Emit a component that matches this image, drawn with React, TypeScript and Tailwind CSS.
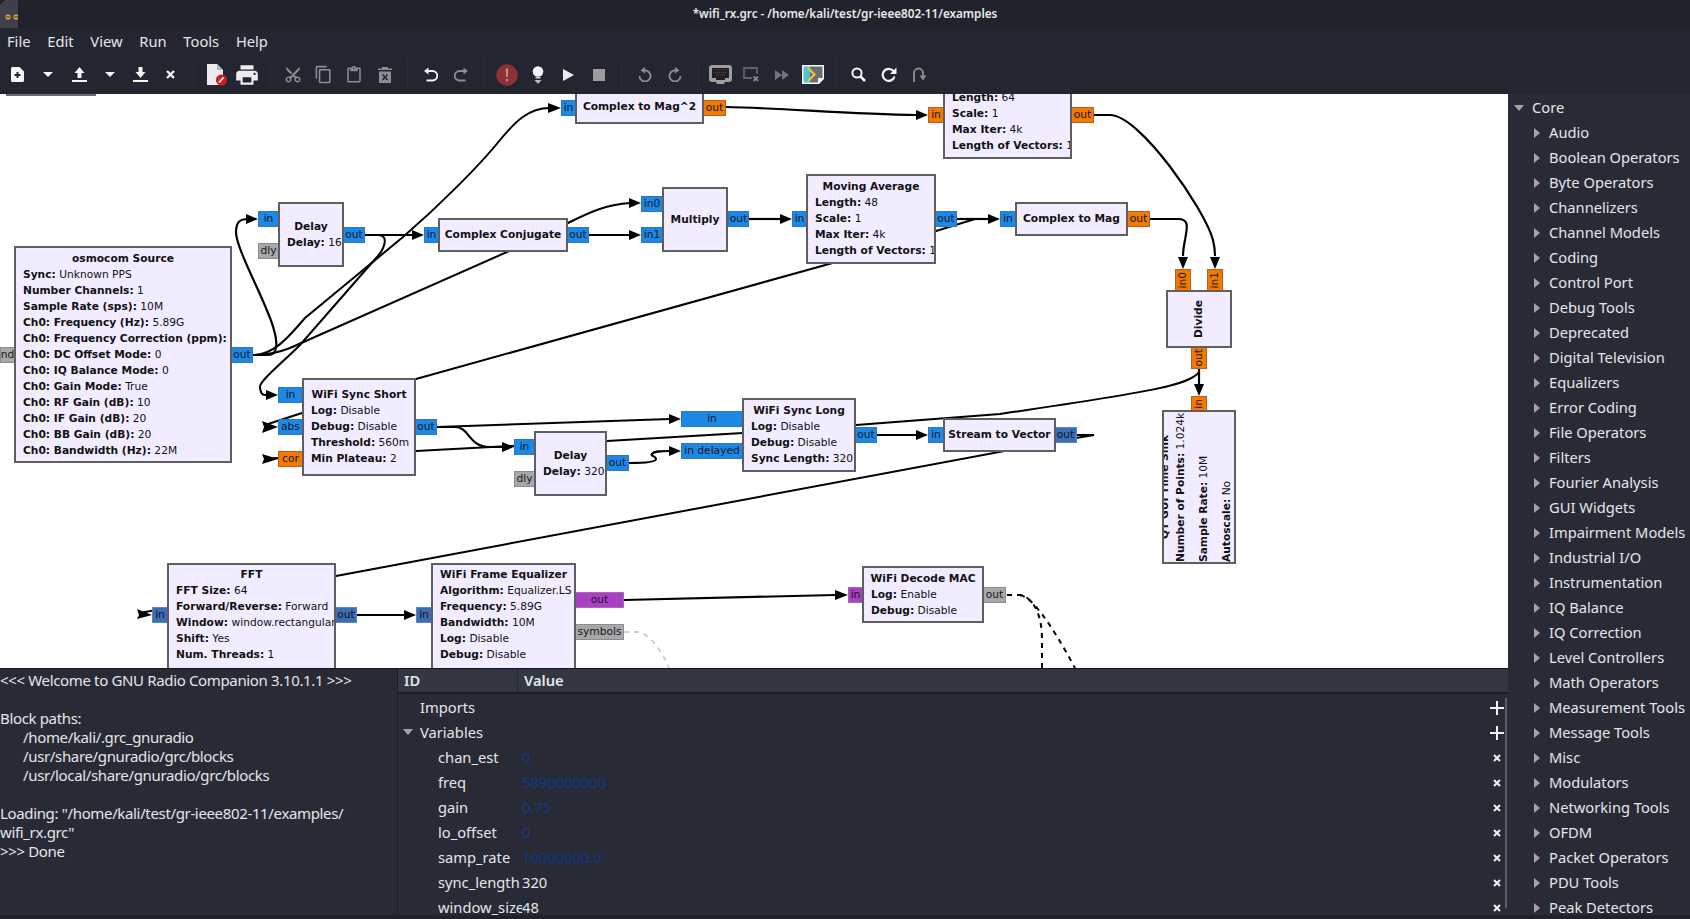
import React from 'react';

const portColors = {
  blue: 'bg-[#1e88e5] border-[#2f74bd]',
  orange: 'bg-[#f27a00] border-[#c05a28]',
  dark: 'bg-[#3d6db3] border-[#5b84c4]',
  purple: 'bg-[#ab3ec2] border-[#9c6fb5]',
  gray: 'bg-[#a8a8a8] border-[#8c8c8c]',
};

interface PortProps {
  pos: string;
  color: keyof typeof portColors;
  label: string;
  vertical?: boolean;
}

const Port = ({ pos, color, label, vertical }: PortProps) => (
  <div className={`absolute flex items-center justify-center overflow-hidden border text-[10.67px] leading-none text-[#101828] ${portColors[color]} ${pos}`}>
    <span className={vertical ? '[writing-mode:vertical-rl] rotate-180' : ''}>{label}</span>
  </div>
);

interface BlockProps {
  pos: string;
  title: string;
  params?: [string, string][];
  vertical?: boolean;
  topAlign?: boolean;
}

const Block = ({ pos, title, params = [], vertical, topAlign }: BlockProps) => (
  <div className={`absolute flex overflow-hidden border-2 border-[#5f5f5f] bg-[#f1ecff] text-[10.67px] leading-[16px] text-[#111] ${vertical ? 'flex-row justify-center' : 'flex-col'} ${topAlign ? 'justify-start pt-[2px]' : 'justify-center'} ${pos}`}>
    <div className={vertical ? 'h-full [writing-mode:vertical-rl] rotate-180' : ''}>
      <div className="whitespace-nowrap text-center font-bold">{title}</div>
      {params.map(([k, v]) => (
        <div key={k} className="whitespace-nowrap pl-[7px]">
          <span className="font-bold">{k}:</span> {v}
        </div>
      ))}
    </div>
  </div>
);

const Wires = () => (
  <svg className="absolute left-0 top-0" width="1508" height="919" fill="none" stroke="#000" strokeWidth="2.2">
    {/* osmocom out */}
    <path d="M253 355 L268 355 C279 355 277 340 274 330 C268 305 236 250 236 232 C236 222 240 219 248 219" />
    <path d="M253 355 C275 355 290 335 305 318 L403 237 C440 205 480 165 500 140 C515 122 528 108 550 108" strokeWidth="2" />
    <path d="M253 355 C270 355 280 352 290 348 L507 252 L568 223 C590 212 608 204 630 203" strokeWidth="2" />
    {/* delay out */}
    <path d="M365 235 L412 235" />
    <path d="M365 235 L378 235 C390 235 384 250 376 258 L300 345 C280 365 258 382 260 388 C261 394 262 395 266 395" strokeWidth="2" />
    <path d="M589 235 L630 235" />
    <path d="M749 219 L780 219" />
    <path d="M957 219 L988 219" />
    {/* moving average out goes back to abs */}
    <path d="M957 219 L975 219 L829 264 L416 379 L302 413 L265 425" strokeWidth="2" />
    {/* divide out goes back to cor */}
    <path d="M1199 372 C1190 385 1150 392 1000 414 L856 425 L743 433 L607 441 L416 451 L302 456 L265 459" strokeWidth="2" />
    <path d="M1199 369 L1199 386" />
    {/* sync short out */}
    <path d="M437 427 L670 419" strokeWidth="2" />
    <path d="M437 427 L455 427 C470 427 468 447 490 447 L502 447" />
    <path d="M629 463 C645 463 656 462 656 459 C656 456 650 456 652 454 C654 451 660 451 670 451" />
    <path d="M877 435 L916 435" />
    <path d="M726 107 C780 108 850 114 916 115" />
    <path d="M1093 115 L1110 115 C1140 115 1205 210 1213 240 C1215 248 1215 250 1215 256" />
    <path d="M1150 219 L1178 219 C1190 219 1187 228 1185 240 C1183 250 1183 252 1183 256" />
    {/* stream to vector out goes back to fft */}
    <path d="M1077 435 L1094 435 L1058 441 L336 576 L140 613" strokeWidth="2" />
    <path d="M357 615 L404 615" />
    <path d="M624 600 L835 595" />
    <path d="M1007 595 L1020 595 C1032 597 1042 612 1042 640 L1042 668" strokeWidth="2" strokeDasharray="5 5" />
    <path d="M1020 595 C1032 597 1050 622 1075 668" strokeWidth="2" strokeDasharray="5 5" />
    <path d="M624 632 L640 632 C650 636 662 650 669 668" stroke="#cfcfcf" strokeWidth="2" strokeDasharray="5 5" />
    {/* arrow heads */}
    <g fill="#000" stroke="none">
      <path d="M258 219 L246 214 L246 224z" />
      <path d="M424 235 L412 230 L412 240z" />
      <path d="M561 108 L548 103 L548 113z" />
      <path d="M641 203 L629 198 L629 208z" />
      <path d="M641 235 L629 230 L629 240z" />
      <path d="M792 219 L780 214 L780 224z" />
      <path d="M1000 219 L988 214 L988 224z" />
      <path d="M278 395 L266 390 L266 400z" />
      <path d="M278 427 L262 421 L264 427 L262 433z" />
      <path d="M278 459 L262 454 L264 459 L262 464z" />
      <path d="M514 447 L502 442 L502 452z" />
      <path d="M681 419 L669 414 L669 424z" />
      <path d="M681 451 L669 446 L669 456z" />
      <path d="M928 435 L916 430 L916 440z" />
      <path d="M928 115 L916 110 L916 120z" />
      <path d="M1215 269 L1210 257 L1220 257z" />
      <path d="M1183 269 L1178 257 L1188 257z" />
      <path d="M1199 396 L1194 384 L1204 384z" />
      <path d="M152 615 L137 609 L139 615 L137 619z" />
      <path d="M416 615 L404 610 L404 620z" />
      <path d="M848 595 L835 590 L835 600z" />
    </g>
  </svg>
);

const Canvas = () => (
  <div className="relative h-[574px] overflow-hidden bg-white">
    {/* offset so everything inside can use window coordinates */}
    <div className="absolute left-0 top-[-94px] h-[919px] w-[1508px] font-['DejaVu_Sans',sans-serif]">
      <Wires />

      <Port pos="left-0 top-[347px] w-[15px] h-[16px]" color="gray" label="nd" />
      <Port pos="left-[231px] top-[347px] w-[22px] h-[16px]" color="blue" label="out" />
      <Block
        pos="left-[14px] top-[246px] w-[218px] h-[217px]"
        title="osmocom Source"
        params={[
          ['Sync', 'Unknown PPS'],
          ['Number Channels', '1'],
          ['Sample Rate (sps)', '10M'],
          ['Ch0: Frequency (Hz)', '5.89G'],
          ['Ch0: Frequency Correction (ppm)', '0'],
          ['Ch0: DC Offset Mode', '0'],
          ['Ch0: IQ Balance Mode', '0'],
          ['Ch0: Gain Mode', 'True'],
          ['Ch0: RF Gain (dB)', '10'],
          ['Ch0: IF Gain (dB)', '20'],
          ['Ch0: BB Gain (dB)', '20'],
          ['Ch0: Bandwidth (Hz)', '22M'],
        ]}
      />

      <Port pos="left-[258px] top-[211px] w-[21px] h-[16px]" color="blue" label="in" />
      <Port pos="left-[258px] top-[243px] w-[21px] h-[16px]" color="gray" label="dly" />
      <Port pos="left-[343px] top-[227px] w-[22px] h-[16px]" color="blue" label="out" />
      <Block pos="left-[278px] top-[202px] w-[66px] h-[65px]" title="Delay" params={[['Delay', '16']]} />

      <Port pos="left-[424px] top-[227px] w-[15px] h-[16px]" color="blue" label="in" />
      <Port pos="left-[567px] top-[227px] w-[22px] h-[16px]" color="blue" label="out" />
      <Block pos="left-[438px] top-[218px] w-[130px] h-[34px]" title="Complex Conjugate" />

      <Port pos="left-[561px] top-[100px] w-[15px] h-[16px]" color="blue" label="in" />
      <Port pos="left-[703px] top-[100px] w-[23px] h-[16px]" color="orange" label="out" />
      <Block pos="left-[575px] top-[90px] w-[129px] h-[34px]" title="Complex to Mag^2" />

      <Port pos="left-[928px] top-[107px] w-[16px] h-[16px]" color="orange" label="in" />
      <Port pos="left-[1071px] top-[107px] w-[23px] h-[16px]" color="orange" label="out" />
      <Block
        pos="left-[943px] top-[69px] w-[129px] h-[90px]"
        title="Moving Average"
        params={[['Length', '64'], ['Scale', '1'], ['Max Iter', '4k'], ['Length of Vectors', '1']]}
      />

      <Port pos="left-[641px] top-[196px] w-[22px] h-[16px]" color="blue" label="in0" />
      <Port pos="left-[641px] top-[227px] w-[22px] h-[16px]" color="blue" label="in1" />
      <Port pos="left-[728px] top-[211px] w-[21px] h-[16px]" color="blue" label="out" />
      <Block pos="left-[662px] top-[187px] w-[66px] h-[65px]" title="Multiply" />

      <Port pos="left-[792px] top-[211px] w-[15px] h-[16px]" color="blue" label="in" />
      <Port pos="left-[935px] top-[211px] w-[22px] h-[16px]" color="blue" label="out" />
      <Block
        pos="left-[806px] top-[174px] w-[130px] h-[90px]"
        title="Moving Average"
        params={[['Length', '48'], ['Scale', '1'], ['Max Iter', '4k'], ['Length of Vectors', '1']]}
      />

      <Port pos="left-[1000px] top-[211px] w-[16px] h-[16px]" color="blue" label="in" />
      <Port pos="left-[1127px] top-[211px] w-[23px] h-[16px]" color="orange" label="out" />
      <Block pos="left-[1015px] top-[202px] w-[113px] h-[34px]" title="Complex to Mag" />

      <Port pos="left-[1175px] top-[269px] w-[16px] h-[22px]" color="orange" label="in0" vertical />
      <Port pos="left-[1207px] top-[269px] w-[16px] h-[22px]" color="orange" label="in1" vertical />
      <Port pos="left-[1191px] top-[347px] w-[16px] h-[22px]" color="orange" label="out" vertical />
      <Block pos="left-[1166px] top-[290px] w-[66px] h-[58px]" title="Divide" vertical />

      <Port pos="left-[1191px] top-[396px] w-[16px] h-[15px]" color="orange" label="in" vertical />
      <Block
        pos="left-[1162px] top-[410px] w-[74px] h-[154px]"
        title="QT GUI Time Sink"
        vertical
        params={[['Number of Points', '1.024k'], ['Sample Rate', '10M'], ['Autoscale', 'No']]}
      />

      <Port pos="left-[278px] top-[387px] w-[25px] h-[16px]" color="blue" label="in" />
      <Port pos="left-[278px] top-[419px] w-[25px] h-[16px]" color="blue" label="abs" />
      <Port pos="left-[278px] top-[451px] w-[25px] h-[16px]" color="orange" label="cor" />
      <Port pos="left-[415px] top-[419px] w-[22px] h-[16px]" color="blue" label="out" />
      <Block
        pos="left-[302px] top-[378px] w-[114px] h-[98px]"
        title="WiFi Sync Short"
        params={[['Log', 'Disable'], ['Debug', 'Disable'], ['Threshold', '560m'], ['Min Plateau', '2']]}
      />

      <Port pos="left-[514px] top-[439px] w-[21px] h-[16px]" color="blue" label="in" />
      <Port pos="left-[514px] top-[471px] w-[21px] h-[16px]" color="gray" label="dly" />
      <Port pos="left-[606px] top-[455px] w-[23px] h-[16px]" color="blue" label="out" />
      <Block pos="left-[534px] top-[431px] w-[73px] h-[65px]" title="Delay" params={[['Delay', '320']]} />

      <Port pos="left-[681px] top-[411px] w-[62px] h-[16px]" color="blue" label="in" />
      <Port pos="left-[681px] top-[443px] w-[62px] h-[16px]" color="blue" label="in delayed" />
      <Port pos="left-[855px] top-[427px] w-[22px] h-[16px]" color="blue" label="out" />
      <Block
        pos="left-[742px] top-[398px] w-[114px] h-[74px]"
        title="WiFi Sync Long"
        params={[['Log', 'Disable'], ['Debug', 'Disable'], ['Sync Length', '320']]}
      />

      <Port pos="left-[928px] top-[427px] w-[16px] h-[16px]" color="blue" label="in" />
      <Port pos="left-[1054px] top-[427px] w-[23px] h-[16px]" color="dark" label="out" />
      <Block pos="left-[943px] top-[418px] w-[113px] h-[34px]" title="Stream to Vector" />

      <Port pos="left-[152px] top-[607px] w-[16px] h-[16px]" color="dark" label="in" />
      <Port pos="left-[335px] top-[607px] w-[22px] h-[16px]" color="dark" label="out" />
      <Block
        pos="left-[167px] top-[563px] w-[169px] h-[118px]"
        title="FFT"
        topAlign
        params={[
          ['FFT Size', '64'],
          ['Forward/Reverse', 'Forward'],
          ['Window', 'window.rectangular...'],
          ['Shift', 'Yes'],
          ['Num. Threads', '1'],
        ]}
      />

      <Port pos="left-[416px] top-[607px] w-[16px] h-[16px]" color="dark" label="in" />
      <Port pos="left-[575px] top-[592px] w-[49px] h-[16px]" color="purple" label="out" />
      <Port pos="left-[575px] top-[624px] w-[49px] h-[16px]" color="gray" label="symbols" />
      <Block
        pos="left-[431px] top-[563px] w-[145px] h-[118px]"
        title="WiFi Frame Equalizer"
        topAlign
        params={[
          ['Algorithm', 'Equalizer.LS'],
          ['Frequency', '5.89G'],
          ['Bandwidth', '10M'],
          ['Log', 'Disable'],
          ['Debug', 'Disable'],
        ]}
      />

      <Port pos="left-[848px] top-[587px] w-[15px] h-[16px]" color="purple" label="in" />
      <Port pos="left-[983px] top-[587px] w-[23px] h-[16px]" color="gray" label="out" />
      <Block
        pos="left-[862px] top-[566px] w-[122px] h-[57px]"
        title="WiFi Decode MAC"
        params={[['Log', 'Enable'], ['Debug', 'Disable']]}
      />
    </div>
    <div className="absolute left-[6px] top-0 h-[2px] w-[90px] bg-[#6b6b6b]" />
  </div>
);

const white = '#f4f4f4';
const dim = '#8c8e93';

const Caret = () => (
  <svg width="10" height="5" viewBox="0 0 10 5"><path d="M0 0H10L5 5z" fill={white} /></svg>
);

const Mat = ({ d, size, color, className }: { d: string; size: number; color: string; className?: string }) => (
  <svg width={size} height={size} viewBox="0 0 24 24" className={className}><path d={d} fill={color} /></svg>
);

const Btn = ({ children }: { children: React.ReactNode }) => (
  <div className="flex h-full w-[30.6px] shrink-0 items-center justify-center">{children}</div>
);

const Sep = () => <div className="mx-[7.1px] h-[32px] w-px shrink-0 bg-[#2a2d37]" />;

const Toolbar = () => (
  <div className="flex h-[39px] shrink-0 items-center bg-[#232630] pl-[2.6px]">
    <Btn>
      <svg width="13" height="15" viewBox="0 0 13 15">
        <path d="M1.5 0H8.5L13 4.5V13.5A1.5 1.5 0 0 1 11.5 15H1.5A1.5 1.5 0 0 1 0 13.5V1.5A1.5 1.5 0 0 1 1.5 0z" fill={white} />
        <path d="M5.5 5H7.5V7H9.5V9H7.5V11H5.5V9H3.5V7H5.5z" fill="#232630" />
      </svg>
    </Btn>
    <Btn><Caret /></Btn>
    <Btn>
      <svg width="15" height="15" viewBox="0 0 15 15">
        <path d="M7.5 0L12.5 6H9.5V11H5.5V6H2.5z M0 13H15V15H0z" fill={white} />
      </svg>
    </Btn>
    <Btn><Caret /></Btn>
    <Btn>
      <svg width="15" height="15" viewBox="0 0 15 15">
        <path d="M5.5 0H9.5V5H12.5L7.5 11L2.5 5H5.5z M0 13H15V15H0z" fill={white} />
      </svg>
    </Btn>
    <Btn>
      <svg width="9" height="9" viewBox="0 0 9 9"><path d="M1 1L8 8M8 1L1 8" stroke={white} strokeWidth="2.4" /></svg>
    </Btn>
    <Sep />
    <Btn>
      <svg width="22" height="22" viewBox="0 0 22 22">
        <path d="M1 0H11L17 6V21H1z" fill="#ececec" />
        <path d="M11 0L17 6H11z" fill="#b5b5b5" />
        <circle cx="15.5" cy="16" r="5.6" fill="#d01c1c" />
        <path d="M13 18.5L17.5 13.5" stroke="#fff" strokeWidth="1.8" />
      </svg>
    </Btn>
    <Btn>
      <Mat size={26} color="#ececec" d="M19 8H5c-1.66 0-3 1.34-3 3v6h4v4h12v-4h4v-6c0-1.66-1.34-3-3-3zm-3 11H8v-5h8v5zm3-7c-.55 0-1-.45-1-1s.45-1 1-1 1 .45 1 1-.45 1-1 1zm-1-9H6v4h12V3z" />
    </Btn>
    <Sep />
    <Btn>
      <Mat size={18} color={dim} className="-rotate-90" d="M9.64 7.64c.23-.5.36-1.05.36-1.64 0-2.21-1.79-4-4-4S2 3.79 2 6s1.79 4 4 4c.59 0 1.14-.13 1.64-.36L10 12l-2.36 2.36C7.14 14.13 6.59 14 6 14c-2.21 0-4 1.79-4 4s1.79 4 4 4 4-1.79 4-4c0-.59-.13-1.14-.36-1.64L12 14l7 7h3v-1L9.64 7.64zM6 8c-1.1 0-2-.89-2-2s.9-2 2-2 2 .89 2 2-.9 2-2 2zm0 12c-1.1 0-2-.89-2-2s.9-2 2-2 2 .89 2 2-.9 2-2 2zm6-7.5c-.28 0-.5-.22-.5-.5s.22-.5.5-.5.5.22.5.5-.22.5-.5.5zM19 3l-6 6 2 2 7-7V3z" />
    </Btn>
    <Btn>
      <Mat size={19} color={dim} d="M16 1H4c-1.1 0-2 .9-2 2v14h2V3h12V1zm3 4H8c-1.1 0-2 .9-2 2v14c0 1.1.9 2 2 2h11c1.1 0 2-.9 2-2V7c0-1.1-.9-2-2-2zm0 16H8V7h11v14z" />
    </Btn>
    <Btn>
      <Mat size={18} color={dim} d="M19 2h-4.18C14.4.84 13.3 0 12 0c-1.3 0-2.4.84-2.82 2H5c-1.1 0-2 .9-2 2v16c0 1.1.9 2 2 2h14c1.1 0 2-.9 2-2V4c0-1.1-.9-2-2-2zm-7 0c.55 0 1 .45 1 1s-.45 1-1 1-1-.45-1-1 .45-1 1-1zm7 18H5V4h2v3h10V4h2v16z" />
    </Btn>
    <Btn>
      <svg width="14" height="16" viewBox="0 0 14 16">
        <path d="M4 0H10V1.5H14V3H0V1.5H4z M1 4.5H13V16H1z" fill={dim} />
        <path d="M4.5 7.5L9.5 13M9.5 7.5L4.5 13" stroke="#232630" strokeWidth="1.6" />
      </svg>
    </Btn>
    <Sep />
    <Btn>
      <svg width="15" height="15" viewBox="0 0 15 15" fill="none">
        <path d="M3 4H9.5A4.2 4.2 0 0 1 9.5 13.5H3.5" stroke={white} strokeWidth="1.8" />
        <path d="M5.5 0.5L1 4L5.5 7.5z" fill={white} />
      </svg>
    </Btn>
    <Btn>
      <svg width="15" height="15" viewBox="0 0 15 15" fill="none" className="-scale-x-100">
        <path d="M3 4H9.5A4.2 4.2 0 0 1 9.5 13.5H3.5" stroke={dim} strokeWidth="1.8" />
        <path d="M5.5 0.5L1 4L5.5 7.5z" fill={dim} />
      </svg>
    </Btn>
    <Sep />
    <Btn>
      <svg width="22" height="22" viewBox="0 0 22 22">
        <circle cx="11" cy="11" r="10.7" fill="#8c3237" />
        <path d="M9.8 4.5H12.2L11.8 13H10.2z M9.9 15H12.1V17.2H9.9z" fill="#b99a9a" />
      </svg>
    </Btn>
    <Btn>
      <svg width="12" height="18" viewBox="0 0 12 18">
        <circle cx="6" cy="5.5" r="5.3" fill="#f4f4f4" />
        <path d="M3.5 11H8.5V12.5H3.5z" fill="#cfcfcf" />
        <path d="M2.5 14H9.5L6 18z" fill="#bdbdbd" />
      </svg>
    </Btn>
    <Btn><svg width="11" height="12" viewBox="0 0 11 12"><path d="M0 0L11 6L0 12z" fill="#ececec" /></svg></Btn>
    <Btn><div className="h-[12px] w-[12px] bg-[#9b9b9b]" /></Btn>
    <Sep />
    <Btn>
      <svg width="14" height="15" viewBox="0 0 14 15" fill="none">
        <path d="M4.5 4A5.5 5.5 0 1 1 1.5 9" stroke={dim} strokeWidth="1.8" />
        <path d="M7 0V6.5L2.5 3.2z" fill={dim} />
      </svg>
    </Btn>
    <Btn>
      <svg width="14" height="15" viewBox="0 0 14 15" fill="none" className="-scale-x-100">
        <path d="M4.5 4A5.5 5.5 0 1 1 1.5 9" stroke={dim} strokeWidth="1.8" />
        <path d="M7 0V6.5L2.5 3.2z" fill={dim} />
      </svg>
    </Btn>
    <Sep />
    <Btn>
      <svg width="23" height="19" viewBox="0 0 23 19">
        <path d="M3 0H20A3 3 0 0 1 23 3V14A3 3 0 0 1 20 17H16L15 19H8L7 17H3A3 3 0 0 1 0 14V3A3 3 0 0 1 3 0z" fill="#9e9e9e" />
        <path d="M3 3H20V13H16V15H7V13H3z" fill="#23201f" />
        <path d="M6 5H17M6 7.5H17M7 10H16" stroke="#4d4d4d" strokeWidth="1" strokeDasharray="1 1" />
      </svg>
    </Btn>
    <Btn>
      <svg width="16" height="15" viewBox="0 0 16 15" fill="none">
        <path d="M9 11H1V1H14V7" stroke="#5f6168" strokeWidth="1.8" />
        <path d="M10.5 9.5L15 14M15 9.5L10.5 14" stroke="#85878d" strokeWidth="1.8" />
      </svg>
    </Btn>
    <Btn>
      <svg width="14" height="10" viewBox="0 0 14 10"><path d="M0 0L7 5L0 10z M7 0L14 5L7 10z" fill="#74767c" /></svg>
    </Btn>
    <Btn>
      <svg width="22" height="19" viewBox="0 0 22 19">
        <path d="M0 0H22V14L17 19H0z" fill="#f5f5f5" />
        <path d="M1.5 1.5H8V17.5H1.5z" fill="#4fc3cf" />
        <path d="M8 1.5H20.5V13H16V17.5H8z" fill="#6e6e6e" />
        <path d="M6 3L12.5 9.5L6 16" fill="none" stroke="#f9c22e" strokeWidth="2.2" />
      </svg>
    </Btn>
    <Sep />
    <Btn>
      <svg width="15" height="15" viewBox="0 0 15 15" fill="none">
        <circle cx="6" cy="6" r="4.6" stroke={white} strokeWidth="2" />
        <path d="M9.5 9.5L14 14" stroke={white} strokeWidth="2.6" />
      </svg>
    </Btn>
    <Btn>
      <svg width="16" height="15" viewBox="0 0 16 15" fill="none">
        <path d="M12.5 4.2A6 6 0 1 0 13.5 9.5" stroke={white} strokeWidth="2.2" />
        <path d="M15.5 0.5V7H9z" fill={white} />
      </svg>
    </Btn>
    <Btn>
      <svg width="15" height="15" viewBox="0 0 15 15" fill="none">
        <path d="M2 15V6A4.5 4.5 0 0 1 11 6V9" stroke={dim} strokeWidth="1.9" />
        <path d="M7.5 8.5H14.5L11 13.5z" fill={dim} />
      </svg>
    </Btn>
  </div>
);

const libraryItems = [
  'Audio', 'Boolean Operators', 'Byte Operators', 'Channelizers', 'Channel Models', 'Coding',
  'Control Port', 'Debug Tools', 'Deprecated', 'Digital Television', 'Equalizers', 'Error Coding',
  'File Operators', 'Filters', 'Fourier Analysis', 'GUI Widgets', 'Impairment Models', 'Industrial I/O',
  'Instrumentation', 'IQ Balance', 'IQ Correction', 'Level Controllers', 'Math Operators',
  'Measurement Tools', 'Message Tools', 'Misc', 'Modulators', 'Networking Tools', 'OFDM',
  'Packet Operators', 'PDU Tools', 'Peak Detectors',
];

const TriDown = () => (
  <svg width="10" height="6" viewBox="0 0 10 6"><path d="M0 0H10L5 6z" fill="#a3a5aa" /></svg>
);
const TriRight = () => (
  <svg width="6" height="10" viewBox="0 0 6 10"><path d="M0 0L6 5L0 10z" fill="#a3a5aa" /></svg>
);

const Library = () => (
  <div className="w-[182px] shrink-0 overflow-hidden bg-[#282b36] pt-[1px] text-[#e3e6ea]">
    <div className="flex h-[25px] items-center pl-[6px]">
      <TriDown />
      <span className="ml-[8px]">Core</span>
    </div>
    {libraryItems.map((name) => (
      <div key={name} className="flex h-[25px] items-center pl-[26px]">
        <TriRight />
        <span className="ml-[9px] whitespace-nowrap">{name}</span>
      </div>
    ))}
  </div>
);

const Console = () => (
  <div className="w-[398px] shrink-0 overflow-hidden whitespace-pre border-r border-[#1b1d24] pt-[2px] text-[15px] leading-[19px] tracking-[-0.35px] text-[#e3e6ea]">
    <div>{'<<< Welcome to GNU Radio Companion 3.10.1.1 >>>'}</div>
    <div>{' '}</div>
    <div>Block paths:</div>
    <div className="pl-[23px]">/home/kali/.grc_gnuradio</div>
    <div className="pl-[23px]">/usr/share/gnuradio/grc/blocks</div>
    <div className="pl-[23px]">/usr/local/share/gnuradio/grc/blocks</div>
    <div>{' '}</div>
    <div>Loading: "/home/kali/test/gr-ieee802-11/examples/</div>
    <div>wifi_rx.grc"</div>
    <div>{'>>> Done'}</div>
  </div>
);

const variables: [string, string, boolean][] = [
  ['chan_est', '0', true],
  ['freq', '5890000000', true],
  ['gain', '0.75', true],
  ['lo_offset', '0', true],
  ['samp_rate', '10000000.0', true],
  ['sync_length', '320', false],
  ['window_size', '48', false],
];

const Plus = () => (
  <svg width="14" height="14" viewBox="0 0 14 14"><path d="M7 0V14M0 7H14" stroke="#f4f4f4" strokeWidth="2" /></svg>
);
const Cross = () => (
  <svg width="8" height="8" viewBox="0 0 8 8"><path d="M1 1L7 7M7 1L1 7" stroke="#f0f0f0" strokeWidth="2" /></svg>
);

const VariableEditor = () => (
  <div className="relative min-w-0 flex-1 overflow-hidden">
    <div className="flex h-[25px] items-center border-b-2 border-[#1b1d24] bg-[#333743] font-semibold text-[#e3e6ea]">
      <div className="flex h-full w-[120px] items-center border-r border-[#23262f] pl-[6px]">ID</div>
      <div className="pl-[6px]">Value</div>
    </div>
    <div className="pt-[1px] text-[#e3e6ea]">
      <div className="flex h-[25px] items-center justify-between pl-[22px] pr-[4px]">
        <span>Imports</span>
        <Plus />
      </div>
      <div className="flex h-[25px] items-center justify-between pr-[4px]">
        <div className="flex items-center pl-[5px]">
          <TriDown />
          <span className="ml-[7px]">Variables</span>
        </div>
        <Plus />
      </div>
      {variables.map(([id, value, blue]) => (
        <div key={id} className="flex h-[25px] items-center pr-[7px]">
          <div className="w-[124px] shrink-0 overflow-hidden whitespace-nowrap pl-[40px]">{id}</div>
          <div className={`flex-1 ${blue ? 'text-[#123a86]' : ''}`}>{value}</div>
          <Cross />
        </div>
      ))}
    </div>
    <div className="absolute right-[1px] top-[29px] h-[210px] w-[2px] bg-[#5c5f68]" />
  </div>
);

export default function App() {
  return (
    <div className="flex h-[919px] w-[1690px] flex-col overflow-hidden bg-[#1f222b] font-['Noto_Sans',sans-serif] text-[14.7px]">
      {/* title bar */}
      <div className="relative flex h-[28px] shrink-0 items-start justify-center bg-[#20232c] pt-[5px] text-[11.7px] font-semibold text-[#e9e9e9]">
        <svg className="absolute left-0 top-0" width="18" height="28" viewBox="0 0 18 28">
          <path d="M5 0H18V28H0V5z" fill="#3e414b" />
          <circle cx="8" cy="17" r="2.6" fill="#f0a732" />
          <circle cx="16" cy="17" r="2.6" fill="#f0a732" />
          <path d="M6 17H10M14 17H18" stroke="#3e2a10" strokeWidth="1" />
        </svg>
        <span>*wifi_rx.grc - /home/kali/test/gr-ieee802-11/examples</span>
      </div>

      {/* menu */}
      <div className="flex h-[27px] shrink-0 items-center bg-[#232630] pl-[-2px] text-[#e3e6ea]">
        {['File', 'Edit', 'View', 'Run', 'Tools', 'Help'].map((m) => (
          <div key={m} className="px-[8.4px] first:pl-[7px]">{m}</div>
        ))}
      </div>

      <Toolbar />

      <div className="flex h-[821px] shrink-0">
        <div className="flex w-[1508px] shrink-0 flex-col">
          <Canvas />
          <div className="flex h-[247px] shrink-0 border-t border-[#14161b] bg-[#282b36]">
            <Console />
            <VariableEditor />
          </div>
        </div>
        <Library />
      </div>
    </div>
  );
}
